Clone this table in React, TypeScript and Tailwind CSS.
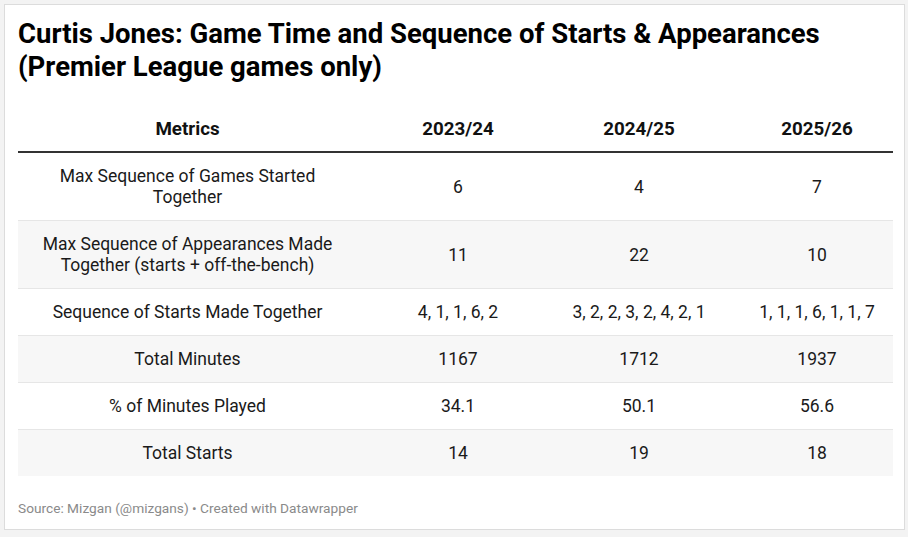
import React from "react";

type Row = { metric: React.ReactNode; values: string[]; shaded?: boolean };

const ROWS: Row[] = [
  { metric: <>Max Sequence of Games Started<br />Together</>, values: ["6", "4", "7"] },
  {
    metric: <>Max Sequence of Appearances Made<br />Together (starts + off-the-bench)</>,
    values: ["11", "22", "10"],
    shaded: true,
  },
  { metric: "Sequence of Starts Made Together", values: ["4, 1, 1, 6, 2", "3, 2, 2, 3, 2, 4, 2, 1", "1, 1, 1, 6, 1, 1, 7"] },
  { metric: "Total Minutes", values: ["1167", "1712", "1937"], shaded: true },
  { metric: "% of Minutes Played", values: ["34.1", "50.1", "56.6"] },
  { metric: "Total Starts", values: ["14", "19", "18"], shaded: true },
];

const SEASONS = ["2023/24", "2024/25", "2025/26"];

export default function App() {
  return (
    <div className="min-h-screen bg-[#f3f3f3] p-[4px] font-['Roboto',sans-serif]">
      <div className="w-[901px] h-[526px] bg-white border border-[#dcdcdc] pl-[13px] pr-[11px] pt-[13px]">
        <h1 className="text-[27.5px] leading-[32.5px] font-bold text-black">
          Curtis Jones: Game Time and Sequence of Starts &amp; Appearances
          <br />
          (Premier League games only)
        </h1>

        <div className="mt-[21px]">
          {/* header */}
          <div className="grid grid-cols-[361px_158px_204px_152px] border-b-2 border-[#333] text-[18.8px] leading-[22px] font-bold text-[#111] text-center">
            <div className="pr-[22px] pt-[14px] pb-[11px]">Metrics</div>
            {SEASONS.map((s) => (
              <div key={s} className="pt-[14px] pb-[11px]">{s}</div>
            ))}
          </div>

          {ROWS.map((r, i) => (
            <div
              key={i}
              className={`grid grid-cols-[361px_158px_204px_152px] items-center text-[17.5px] leading-[21px] text-[#1a1a1a] text-center ${
                r.shaded ? "bg-[#f7f7f7]" : "bg-white"
              } ${i < ROWS.length - 1 ? "border-b border-[#e6e6e6]" : ""}`}
            >
              <div className="pr-[22px] pt-[13px] pb-[12px]">{r.metric}</div>
              {r.values.map((v, j) => (
                <div key={j} className="pt-[13px] pb-[12px]">{v}</div>
              ))}
            </div>
          ))}
        </div>

        <p className="mt-[23px] text-[13.7px] leading-[18px] text-[#8a8a8a]">
          Source: Mizgan (@mizgans) • Created with Datawrapper
        </p>
      </div>
    </div>
  );
}
